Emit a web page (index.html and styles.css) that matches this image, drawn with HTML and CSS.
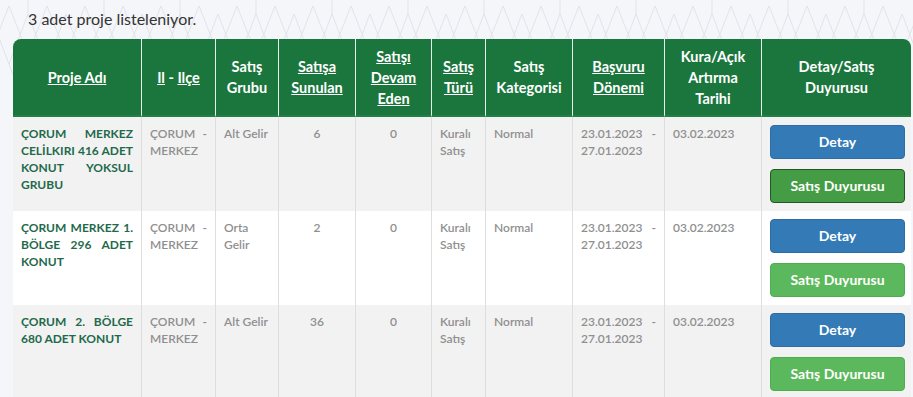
FILE: index.html
```html
<!DOCTYPE html>
<html lang="tr">
<head>
<meta charset="utf-8">
<title>Proje Listesi</title>
<link rel="stylesheet" href="styles.css">
</head>
<body>
<svg class="bg-pattern" width="913" height="120" aria-hidden="true">
  <defs>
    <pattern id="stars" width="76" height="120" patternUnits="userSpaceOnUse" x="-10" y="-6">
      <path d="M0 60 L19 12 L38 60 L57 12 L76 60 M0 20 L19 70 L38 20 L57 70 L76 20 M38 20 L38 0 M0 60 L0 120 M76 60 L76 120 M19 70 L38 120 L57 70" fill="none" stroke="#e1e3ea" stroke-width="1"/>
    </pattern>
  </defs>
  <rect width="913" height="120" fill="url(#stars)"/>
</svg>
<main class="page">
  <p class="count">3 adet proje listeleniyor.</p>
  <table class="projects">
    <colgroup>
      <col class="c1"><col class="c2"><col class="c3"><col class="c4"><col class="c5">
      <col class="c6"><col class="c7"><col class="c8"><col class="c9"><col class="c10">
    </colgroup>
    <thead>
      <tr>
        <th><a href="#">Proje Adı</a></th>
        <th><a href="#">Il</a> - <a href="#">Ilçe</a></th>
        <th>Satış Grubu</th>
        <th><a href="#">Satışa Sunulan</a></th>
        <th><a href="#">Satışı Devam Eden</a></th>
        <th><a href="#">Satış Türü</a></th>
        <th>Satış Kategorisi</th>
        <th><a href="#">Başvuru Dönemi</a></th>
        <th>Kura/Açık Artırma Tarihi</th>
        <th>Detay/Satış Duyurusu</th>
      </tr>
    </thead>
    <tbody>
      <tr>
        <td class="name">ÇORUM MERKEZ CELİLKIRI 416 ADET KONUT YOKSUL GRUBU</td>
        <td class="just">ÇORUM - MERKEZ</td>
        <td>Alt Gelir</td>
        <td class="num">6</td>
        <td class="num">0</td>
        <td>Kuralı Satış</td>
        <td>Normal</td>
        <td class="just">23.01.2023 - 27.01.2023</td>
        <td>03.02.2023</td>
        <td class="actions"><a class="btn btn-blue" href="#">Detay</a><a class="btn btn-green active" href="#">Satış Duyurusu</a></td>
      </tr>
      <tr>
        <td class="name">ÇORUM MERKEZ 1. BÖLGE 296 ADET KONUT</td>
        <td class="just">ÇORUM - MERKEZ</td>
        <td>Orta Gelir</td>
        <td class="num">2</td>
        <td class="num">0</td>
        <td>Kuralı Satış</td>
        <td>Normal</td>
        <td class="just">23.01.2023 - 27.01.2023</td>
        <td>03.02.2023</td>
        <td class="actions"><a class="btn btn-blue" href="#">Detay</a><a class="btn btn-green" href="#">Satış Duyurusu</a></td>
      </tr>
      <tr>
        <td class="name">ÇORUM 2. BÖLGE 680 ADET KONUT</td>
        <td class="just">ÇORUM - MERKEZ</td>
        <td>Alt Gelir</td>
        <td class="num">36</td>
        <td class="num">0</td>
        <td>Kuralı Satış</td>
        <td>Normal</td>
        <td class="just">23.01.2023 - 27.01.2023</td>
        <td>03.02.2023</td>
        <td class="actions"><a class="btn btn-blue" href="#">Detay</a><a class="btn btn-green" href="#">Satış Duyurusu</a></td>
      </tr>
    </tbody>
  </table>
</main>
</body>
</html>
```
FILE: styles.css
```css
html, body {
  margin: 0;
  padding: 0;
}
body {
  background: #f5f6f9;
  font-family: "Lato", "Open Sans", sans-serif;
  color: #333;
  overflow: hidden;
}
.bg-pattern {
  position: absolute;
  left: 0;
  top: 0;
  z-index: 0;
}
.page {
  position: relative;
  z-index: 1;
  padding: 0 2px 0 13px;
}
.count {
  margin: 0;
  padding: 9px 0 0 15px;
  height: 39px;
  box-sizing: border-box;
  font-size: 16px;
  line-height: 20px;
  font-weight: 400;
  color: #333;
}
.projects {
  width: 898px;
  table-layout: fixed;
  border-collapse: separate;
  border-spacing: 0;
}
.c1 { width: 128px; }
.c2 { width: 74px; }
.c3 { width: 63px; }
.c4 { width: 77px; }
.c5 { width: 76px; }
.c6 { width: 54px; }
.c7 { width: 87px; }
.c8 { width: 92px; }
.c9 { width: 97px; }
.c10 { width: 150px; }
.projects th {
  background: #1b763d;
  color: #fff;
  font-size: 14.5px;
  line-height: 21px;
  font-weight: 700;
  text-align: center;
  vertical-align: middle;
  height: 78px;
  box-sizing: border-box;
  padding: 4px 8px;
  border-left: 1px solid #e9f1ec;
  border-bottom: 2px solid #227f45;
}
.projects th:first-child {
  border-left: none;
  border-top-left-radius: 8px;
}
.projects th:last-child {
  border-top-right-radius: 8px;
}
.projects th a {
  color: #fff;
  text-decoration: underline;
}
.projects td {
  font-size: 12px;
  line-height: 17px;
  font-weight: 600;
  color: #8f8f8f;
  vertical-align: top;
  padding: 8px 8px;
  height: 94px;
  box-sizing: border-box;
  border-left: 1px solid #dedede;
}
.projects td:first-child {
  border-left: none;
}
.projects tbody tr:nth-child(odd) td {
  background: #f2f2f2;
}
.projects tbody tr:nth-child(even) td {
  background: #fff;
}
.projects td.name {
  color: #1f6a4b;
  font-weight: 700;
  text-align: justify;
}
.projects td.just {
  text-align: justify;
}
.projects td.num {
  text-align: center;
}
.projects td.actions {
  padding: 8px 6px 8px 8px;
}
.btn {
  display: block;
  width: 135px;
  height: 34px;
  box-sizing: border-box;
  border-radius: 4px;
  border: 1px solid transparent;
  color: #fff;
  font-size: 14px;
  font-weight: 700;
  line-height: 32px;
  text-align: center;
  text-decoration: none;
}
.btn + .btn {
  margin-top: 10px;
}
.btn-blue {
  background: #337ab7;
  border-color: #2e6da4;
}
.btn-green {
  background: #5cb85c;
  border-color: #4cae4c;
}
.btn-green.active {
  background: #449d44;
  border-color: #255625;
}
```
